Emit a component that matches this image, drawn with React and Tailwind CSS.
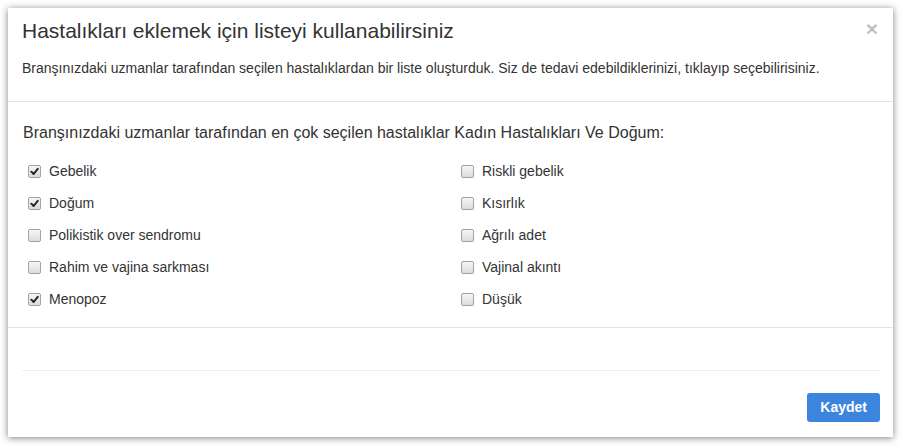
import React, { useState } from "react";

const LEFT = [
  { label: "Gebelik", checked: true },
  { label: "Doğum", checked: true },
  { label: "Polikistik over sendromu", checked: false },
  { label: "Rahim ve vajina sarkması", checked: false },
  { label: "Menopoz", checked: true },
];

const RIGHT = [
  { label: "Riskli gebelik", checked: false },
  { label: "Kısırlık", checked: false },
  { label: "Ağrılı adet", checked: false },
  { label: "Vajinal akıntı", checked: false },
  { label: "Düşük", checked: false },
];

const CheckRow = ({ label, checked, onToggle }) => (
  <label className="h-[32px] pl-[5px] flex items-center gap-[8px] cursor-pointer" onClick={onToggle}>
    <span className="w-[13px] h-[13px] rounded-[2px] border border-[#a3a3a3] bg-gradient-to-b from-[#f6f6f6] to-[#dcdcdc] flex items-center justify-center">
      {checked ? (
        <svg width="9" height="9" viewBox="0 0 10 10">
          <path d="M1.5 5.2 L4 7.8 L8.6 2" fill="none" stroke="#2a2a2a" strokeWidth="2.2" strokeLinecap="round" strokeLinejoin="round" />
        </svg>
      ) : null}
    </span>
    <span className="text-[14px] text-[#333]">{label}</span>
  </label>
);

export default function App() {
  const [items, setItems] = useState({ left: LEFT, right: RIGHT });

  const toggle = (side, i) => {
    setItems((prev) => ({
      ...prev,
      [side]: prev[side].map((it, j) => (j === i ? { ...it, checked: !it.checked } : it)),
    }));
  };

  return (
    <div className="w-[902px] h-[446px] bg-white p-[8px] font-['Liberation_Sans',Arial,sans-serif]">
      <div className="relative w-[885px] h-[429px] bg-white shadow-[0_1px_7px_rgba(0,0,0,0.5)] flex flex-col">
        <button className="absolute right-[15px] top-[10px] text-[21px] leading-none font-bold text-black opacity-25">
          ×
        </button>

        <div className="px-[14px] pt-[10px] pb-[23px] border-b border-[#e5e5e5]">
          <h4 className="text-[21px] leading-[25px] text-[#333]">Hastalıkları eklemek için listeyi kullanabilirsiniz</h4>
          <p className="mt-[15px] text-[14px] leading-[20px] text-[#333]">
            Branşınızdaki uzmanlar tarafından seçilen hastalıklardan bir liste oluşturduk. Siz de tedavi edebildiklerinizi, tıklayıp seçebilirisiniz.
          </p>
        </div>

        <div className="px-[15px] pt-[21px] pb-[12px] border-b border-[#e5e5e5]">
          <p className="text-[16px] leading-[20px] text-[#333] mb-[12px]">
            Branşınızdaki uzmanlar tarafından en çok seçilen hastalıklar Kadın Hastalıkları Ve Doğum:
          </p>
          <div className="grid grid-cols-[433px_1fr]">
            <div>
              {items.left.map((it, i) => (
                <CheckRow key={it.label} {...it} onToggle={() => toggle("left", i)} />
              ))}
            </div>
            <div>
              {items.right.map((it, i) => (
                <CheckRow key={it.label} {...it} onToggle={() => toggle("right", i)} />
              ))}
            </div>
          </div>
        </div>

        <div className="flex-1 px-[14px] pr-[13px] pt-[42px] flex flex-col">
          <div className="border-t border-[#eeeeee]" />
          <div className="flex justify-end pt-[22px]">
            <button className="h-[29px] px-[13px] rounded-[3px] bg-[#3b85de] text-white text-[14px] font-bold">Kaydet</button>
          </div>
        </div>
      </div>
    </div>
  );
}
